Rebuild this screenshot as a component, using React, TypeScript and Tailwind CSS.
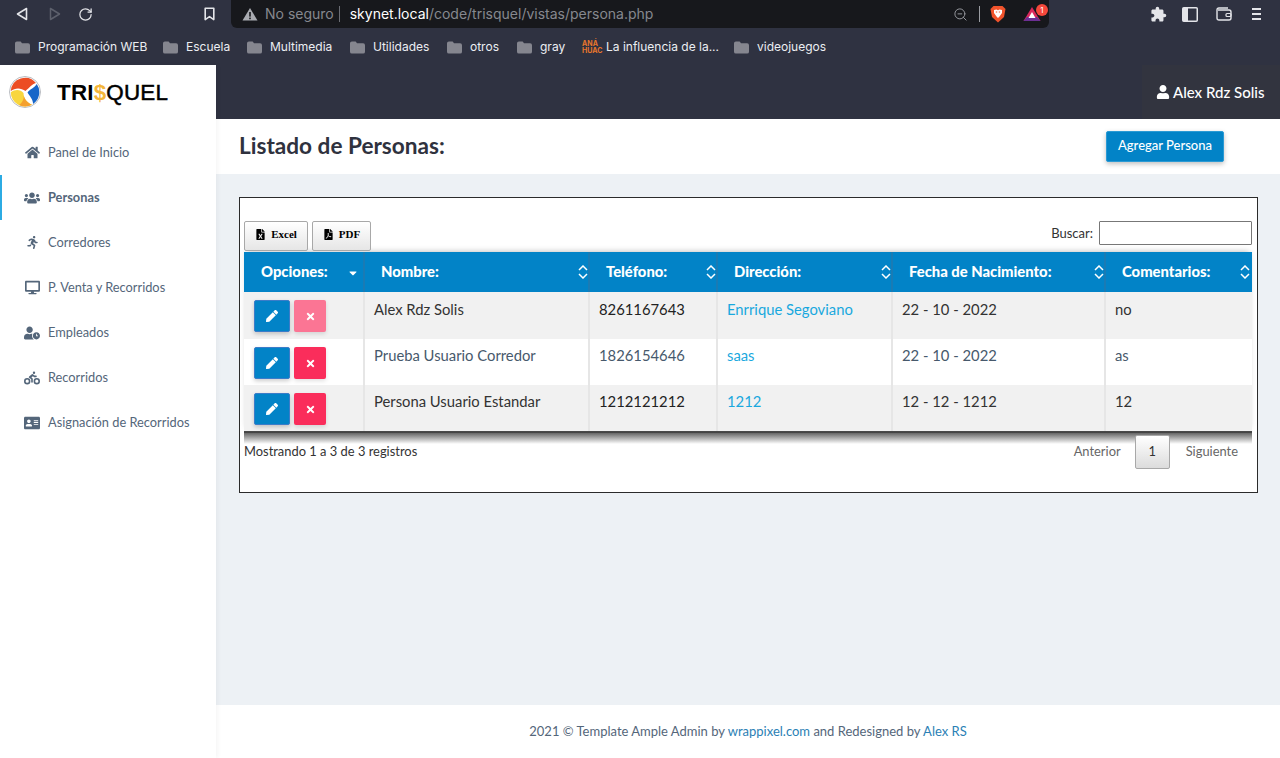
import {
  FaHome,
  FaUsers,
  FaRunning,
  FaDesktop,
  FaUserClock,
  FaBiking,
  FaAddressCard,
  FaPen,
  FaTimes,
  FaFileExcel,
  FaFilePdf,
  FaUser,
  FaCaretDown,
} from "react-icons/fa";
import { MdExtension } from "react-icons/md";
import { RotateCw, ZoomOut } from "lucide-react";
import type { ReactNode } from "react";

const bookmarks = [
  { label: "Programación WEB", w: "w-[148px]" },
  { label: "Escuela", w: "w-[84px]" },
  { label: "Multimedia", w: "w-[103px]" },
  { label: "Utilidades", w: "w-[97px]" },
  { label: "otros", w: "w-[70px]" },
  { label: "gray", w: "w-[65px]" },
];

const navItems = [
  { label: "Panel de Inicio", icon: <FaHome size={15} /> },
  { label: "Personas", icon: <FaUsers size={16} />, active: true },
  { label: "Corredores", icon: <FaRunning size={13} /> },
  { label: "P. Venta y Recorridos", icon: <FaDesktop size={15} /> },
  { label: "Empleados", icon: <FaUserClock size={16} /> },
  { label: "Recorridos", icon: <FaBiking size={16} /> },
  { label: "Asignación de Recorridos", icon: <FaAddressCard size={16} /> },
];

const rows = [
  { name: "Alex Rdz Solis", tel: "8261167643", dir: "Enrrique Segoviano", date: "22 - 10 - 2022", com: "no", faded: true },
  { name: "Prueba Usuario Corredor", tel: "1826154646", dir: "saas", date: "22 - 10 - 2022", com: "as" },
  { name: "Persona Usuario Estandar", tel: "1212121212", dir: "1212", date: "12 - 12 - 1212", com: "12" },
];

const headers = ["Nombre:", "Teléfono:", "Dirección:", "Fecha de Nacimiento:", "Comentarios:"];

function Folder() {
  return (
    <svg width="15" height="13" viewBox="0 0 16 13" className="shrink-0">
      <path d="M0 2 Q0 0 2 0 H6 L7.5 2 H14 Q16 2 16 4 V11 Q16 13 14 13 H2 Q0 13 0 11 Z" fill="#85868f" />
    </svg>
  );
}

function Bookmark({ label, className }: { label: string; className: string }) {
  return (
    <div className={`flex items-center gap-2 shrink-0 ${className}`}>
      <Folder />
      <span className="text-xs text-[#eceef2] whitespace-nowrap">{label}</span>
    </div>
  );
}

function SortArrows({ last }: { last: boolean }) {
  return (
    <svg width="10" height="14" viewBox="0 0 10 14" className={`absolute top-[13px] ${last ? "right-[2px]" : "right-0"}`}>
      <path d="M1 5 L5 1 L9 5 M1 9 L5 13 L9 9" fill="none" stroke="#fff" strokeWidth="1.5" />
    </svg>
  );
}

function TrisquelLogo() {
  return (
    <svg width="32" height="32" viewBox="0 0 32 32">
      <circle cx="16" cy="16" r="15.5" fill="#fff" stroke="#b9bcc2" strokeWidth="1" />
      <path d="M1.8 15 A14.3 14.3 0 0 1 27 7 C23 8 20 12 16.5 15 C12 11.5 6 11.5 1.8 15 Z" fill="#ec4d24" />
      <path d="M27.8 8 A14.3 14.3 0 0 1 24 28 C24.5 24 20.5 20 18.5 16.5 C21 13 25.5 12 27.8 8 Z" fill="#1565c8" />
      <path d="M1.8 16.2 C6 13 11.5 13 14.5 17 C14.5 22 18 26.5 23 28.8 A14.3 14.3 0 0 1 1.8 16.2 Z" fill="#f8d63e" />
      <path d="M14.5 18 C15 23 18 26.5 23 28.8 A14.3 14.3 0 0 1 10 29 C14 26 15.5 22 14.5 18 Z" fill="#f4a02e" />
    </svg>
  );
}

function BrowserBar() {
  return (
    <div className="h-[65px] bg-[#2f3241] shrink-0 font-['Inter',sans-serif]">
      <div className="h-[28px] flex items-center relative">
        <div className="flex items-center w-[231px] h-full pl-[16px]">
          <svg width="12" height="14" viewBox="0 0 12 14" className="mr-[21px]">
            <path d="M10.5 1.5 V12.5 L1.5 7 Z" fill="none" stroke="#e4e5e9" strokeWidth="1.6" strokeLinejoin="round" />
          </svg>
          <svg width="12" height="14" viewBox="0 0 12 14" className="mr-[17px]">
            <path d="M1.5 1.5 V12.5 L10.5 7 Z" fill="none" stroke="#5d606c" strokeWidth="1.5" strokeLinejoin="round" />
          </svg>
          <RotateCw size={15} color="#e4e5e9" strokeWidth={2} />
          <svg width="11" height="14" viewBox="0 0 11 14" className="ml-[111px]">
            <path d="M1.2 1.2 H9.8 V12.6 L5.5 9.6 L1.2 12.6 Z" fill="none" stroke="#e4e5e9" strokeWidth="1.6" strokeLinejoin="round" />
          </svg>
        </div>
        <div className="w-[818px] h-full bg-[#17181c] rounded-b-md flex items-center pl-[11px] text-sm">
          <svg width="16" height="14" viewBox="0 0 16 14" className="mr-[7px]">
            <path d="M8 1 L15.5 13.5 H.5 Z" fill="#a9abb1" />
            <rect x="7.2" y="5" width="1.6" height="4.6" fill="#17181c" />
            <rect x="7.2" y="10.6" width="1.6" height="1.6" fill="#17181c" />
          </svg>
          <span className="text-[#86888f]">No seguro</span>
          <span className="ml-[5px] mr-[10px] h-[16px] w-px bg-[#6b6d74]" />
          <span className="text-white">skynet.local</span>
          <span className="text-[#86888f]">/code/trisquel/vistas/persona.php</span>
          <div className="ml-auto flex items-center">
            <ZoomOut size={15} color="#9b9da3" strokeWidth={1.5} />
            <span className="mx-[11px] h-[16px] w-px bg-[#9a9ca2]" />
            <svg width="16" height="18" viewBox="0 0 16 18" className="-ml-px">
              <path d="M3.5 1 H12.5 L15.5 4 L14 12 L8 17.5 L2 12 L.5 4 Z" fill="#f0532c" />
              <path d="M4 5 L6.5 4.5 L8 5.3 L9.5 4.5 L12 5 L12 8 L9.5 11.5 L8 13 L6.5 11.5 L4 8 Z" fill="#fff" />
              <path d="M5.8 7 H7.2 M8.8 7 H10.2" stroke="#f0532c" strokeWidth="1" />
            </svg>
            <div className="relative ml-[17px] mr-[8px]">
              <svg width="18" height="16" viewBox="0 0 18 16" className="block">
                <path d="M9 1 L17.5 15 H.5 Z" fill="#d9295c" />
                <path d="M.5 15 L4 11 H14 L17.5 15 Z" fill="#6b2f93" />
                <path d="M9 6 L12.5 12 H5.5 Z" fill="#fff" />
              </svg>
              <span className="absolute -top-[2px] -right-[7px] w-[12px] h-[12px] rounded-full bg-[#f5483b] text-white text-[8px] leading-[12px] text-center">
                1
              </span>
            </div>
          </div>
        </div>
        <div className="flex-1 flex items-center h-full pl-[101px]">
          <MdExtension size={17} color="#e4e5e9" />
          <svg width="16" height="15" viewBox="0 0 16 15" className="ml-[15px]">
            <rect x=".75" y=".75" width="14.5" height="13.5" rx="1" fill="none" stroke="#e4e5e9" strokeWidth="1.5" />
            <rect x="1" y="1" width="5" height="13" fill="#e4e5e9" />
          </svg>
          <svg width="16" height="14" viewBox="0 0 16 14" className="ml-[18px]">
            <path d="M2 3 H13 Q15 3 15 5 V11 Q15 13 13 13 H3 Q1 13 1 11 V3 Q1 1 3 1 H12" fill="none" stroke="#e4e5e9" strokeWidth="1.4" />
            <rect x="10" y="6.5" width="5" height="3" rx="1" fill="none" stroke="#e4e5e9" strokeWidth="1.2" />
          </svg>
          <div className="ml-[20px] flex flex-col gap-[3px]">
            <span className="w-[9px] h-[2px] bg-[#e4e5e9]" />
            <span className="w-[9px] h-[2px] bg-[#e4e5e9]" />
            <span className="w-[9px] h-[2px] bg-[#e4e5e9]" />
          </div>
        </div>
      </div>
      <div className="h-[37px] flex items-center pl-[15px] pt-px">
        {bookmarks.map((b) => (
          <Bookmark key={b.label} label={b.label} className={b.w} />
        ))}
        <div className="flex items-center gap-2 w-[152px] shrink-0">
          <span className="w-[16px] text-[7px] leading-[7px] font-bold text-[#e8762c] text-center">
            ANÁ
            <br />
            HUAC
          </span>
          <span className="text-xs text-[#eceef2] whitespace-nowrap">La influencia de la...</span>
        </div>
        <Bookmark label="videojuegos" className="" />
      </div>
    </div>
  );
}

function Sidebar() {
  return (
    <aside className="w-[216px] shrink-0 bg-white shadow-[2px_0_4px_rgba(0,0,0,0.04)] z-10">
      <div className="h-[54px] flex items-center pl-[9px]">
        <TrisquelLogo />
        <span className="ml-4 mt-[2px] text-[22.4px] font-bold tracking-[0.2px] text-black font-['Liberation_Sans',sans-serif]">
          TRI<span className="text-[#f4b63a]">$</span>
          <span className="font-normal [-webkit-text-stroke:0.5px_black]">QUEL</span>
        </span>
      </div>
      <nav className="mt-[11px]">
        {navItems.map((item) => (
          <div
            key={item.label}
            className={`h-[45px] flex items-center text-[12.8px] text-[#54667a] ${
              item.active ? "border-l-2 border-[#2cabe3] pl-[22px] font-bold" : "pl-[24px]"
            }`}
          >
            <span className="w-[16px] flex justify-center">{item.icon}</span>
            <span className="ml-[8px]">{item.label}</span>
          </div>
        ))}
      </nav>
    </aside>
  );
}

function PersonTable() {
  return (
    <div className="shadow-[0_-3px_6px_-3px_rgba(0,0,0,0.3)] border-b-2 border-[#1c1c1c] relative">
      <table className="w-full table-fixed border-collapse text-[14.8px] leading-5">
        <colgroup>
          <col className="w-[120px]" />
          <col className="w-[225px]" />
          <col className="w-[128px]" />
          <col className="w-[175px]" />
          <col className="w-[213px]" />
          <col />
        </colgroup>
        <thead>
          <tr className="h-[40px] bg-[#0283c7] text-white text-left">
            <th className="relative pl-[17px] pb-[2px] font-black">
              Opciones:
              <FaCaretDown size={12} className="absolute right-[4px] top-[15px]" />
            </th>
            {headers.map((h, i) => (
              <th key={h} className="relative pl-[16px] pb-[2px] font-black border-l-2 border-[#1a7bb4]">
                {h}
                <SortArrows last={i === headers.length - 1} />
              </th>
            ))}
          </tr>
        </thead>
        <tbody>
          {rows.map((r, i) => {
            const pad = i === 0 ? "pt-[7px]" : "pt-[6px]";
            const tone = i === 1 ? "text-[#47596c]" : "text-[#333]";
            return (
              <tr key={r.name} className={`${i % 2 === 0 ? "bg-[#f1f1f1]" : "bg-white"} ${i === 0 ? "h-[47px]" : "h-[46px]"}`}>
                <td className="align-top pt-[8px] pl-[10px]">
                  <div className="flex gap-1">
                    <button className="w-[36px] h-[32px] bg-[#0283c7] border border-[#3b7cc9] rounded-[2px] shadow-[0_2px_4px_rgba(0,0,0,0.2)] flex items-center justify-center text-white">
                      <FaPen size={12} />
                    </button>
                    <button
                      className={`w-[32px] h-[32px] rounded-[2px] shadow-[0_2px_4px_rgba(0,0,0,0.12)] flex items-center justify-center text-white ${
                        r.faded ? "bg-[#fb7594]" : "bg-[#fa2d5b]"
                      }`}
                    >
                      <FaTimes size={11} />
                    </button>
                  </div>
                </td>
                <td className={`align-top ${pad} pl-[9px] border-l-2 border-[#e6e6e6] ${tone}`}>{r.name}</td>
                <td className={`align-top ${pad} pl-[9px] border-l-2 border-[#e6e6e6] ${i === 1 ? "text-[#47596c]" : "text-[#222]"}`}>
                  {r.tel}
                </td>
                <td className={`align-top ${pad} pl-[9px] border-l-2 border-[#e6e6e6] text-[#19a8de]`}>{r.dir}</td>
                <td className={`align-top ${pad} pl-[9px] border-l-2 border-[#e6e6e6] ${tone}`}>{r.date}</td>
                <td className={`align-top ${pad} pl-[9px] border-l-2 border-[#e6e6e6] ${tone}`}>{r.com}</td>
              </tr>
            );
          })}
        </tbody>
      </table>
      {/* sombra inferior de la tabla */}
      <div className="absolute top-full left-0 right-0 h-[13px] bg-gradient-to-b from-[#4a4a4a] to-transparent" />
    </div>
  );
}

function ExportButton({ icon, label, w }: { icon: ReactNode; label: string; w: string }) {
  return (
    <button
      className={`${w} h-[30px] pb-[3px] border border-[#a8a8a8] rounded-[2px] bg-gradient-to-b from-white to-[#e6e6e6] flex items-center justify-center gap-[5px] text-[11px] font-bold text-black font-['Liberation_Serif',serif]`}
    >
      {icon}
      {label}
    </button>
  );
}

export default function App() {
  return (
    <div className="w-[1280px] h-[758px] flex flex-col overflow-hidden font-['Lato','Noto_Sans',sans-serif]">
      <BrowserBar />
      <div className="flex-1 flex min-h-0">
        <Sidebar />
        <main className="flex-1 flex flex-col bg-[#edf1f5] min-w-0">
          <header className="h-[54px] shrink-0 bg-[#2f3241] flex justify-end">
            <div className="w-[138px] bg-[#32343f] flex items-center pl-[14px] text-white text-[15px] font-medium">
              <FaUser size={14} className="mr-[3px]" />
              Alex Rdz Solis
            </div>
          </header>
          <div className="h-[55px] shrink-0 bg-white flex items-center pl-[23px] pr-[56px] justify-between">
            <h1 className="text-[22.6px] font-bold text-[#2f323e] mb-[2px]">Listado de Personas:</h1>
            <button className="w-[118px] h-[31px] mb-[1px] bg-[#0283c7] border border-[#2b9ad4] rounded-[2px] shadow-[0_2px_5px_rgba(0,0,0,0.25)] text-white text-[13px] font-medium">
              Agregar Persona
            </button>
          </div>
          <div className="flex-1 pt-[23px] pl-[23px] pr-[22px]">
            <section className="h-[296px] bg-white border border-[#2b2b2b] pt-[23px] pl-[4px] pr-[5px]">
              <div className="h-[31px] flex justify-between relative z-10">
                <div className="flex gap-[4px]">
                  <ExportButton icon={<FaFileExcel size={11} />} label="Excel" w="w-[64px]" />
                  <ExportButton icon={<FaFilePdf size={11} />} label="PDF" w="w-[59px]" />
                </div>
                <label className="flex items-start text-[13px] text-[#333]">
                  <span className="mr-[6px] mt-[3px]">Buscar:</span>
                  <input className="w-[153px] h-[24px] bg-white border border-[#777] rounded-[1px]" />
                </label>
              </div>
              <PersonTable />
              <div className="flex justify-between text-[12.9px] text-[#333] relative z-10">
                <span className="mt-[9px]">Mostrando 1 a 3 de 3 registros</span>
                <div className="flex items-center mt-[2px] pr-[14px] text-[#666]">
                  <span className="mr-[14px]">Anterior</span>
                  <span className="w-[35px] h-[34px] border border-[#a8a8a8] rounded-[2px] bg-gradient-to-b from-white to-[#dcdcdc] flex items-center justify-center text-[#333]">
                    1
                  </span>
                  <span className="ml-[16px]">Siguiente</span>
                </div>
              </div>
            </section>
          </div>
          <footer className="h-[53px] shrink-0 bg-white flex items-center justify-center text-[13px] text-[#54667a]">
            <span>
              2021 © Template Ample Admin by <span className="text-[#2b7fb5]">wrappixel.com</span> and Redesigned by{" "}
              <span className="text-[#2b7fb5]">Alex RS</span>
            </span>
          </footer>
        </main>
      </div>
    </div>
  );
}
